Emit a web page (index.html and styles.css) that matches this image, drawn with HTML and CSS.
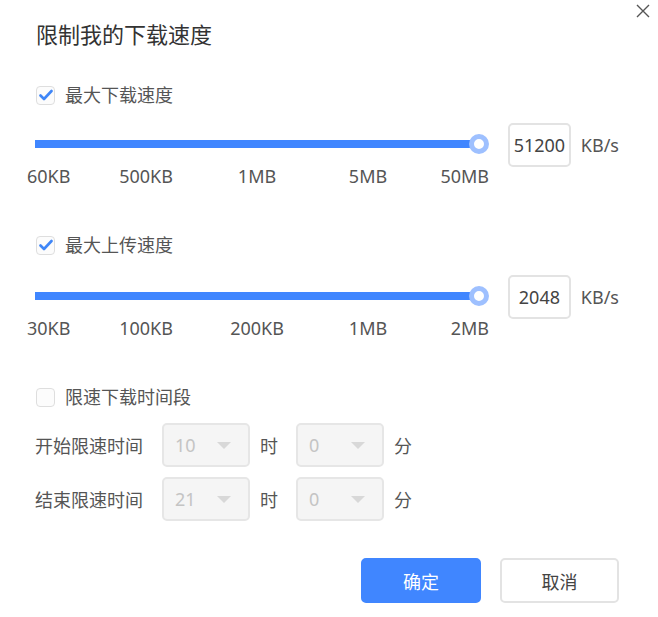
FILE: index.html
```html
<!DOCTYPE html>
<html lang="zh-CN">
<head>
<meta charset="utf-8">
<title>限制我的下载速度</title>
<link rel="stylesheet" href="styles.css">
</head>
<body>
<div class="dialog">
  <button class="close" aria-label="关闭">
    <svg width="14" height="14" viewBox="0 0 14 14"><path d="M1 1L13 13M13 1L1 13" stroke="#555" stroke-width="1.4" fill="none"/></svg>
  </button>
  <h1 class="title">限制我的下载速度</h1>

  <div class="check-row first">
    <span class="checkbox checked"><svg width="14" height="12" viewBox="0 0 14 12"><path d="M1.5 6.5L5 10L12.5 2" stroke="#3f86f7" stroke-width="2.6" fill="none" stroke-linecap="round" stroke-linejoin="round"/></svg></span>
    <span class="check-label">最大下载速度</span>
  </div>
  <div class="slider-row">
    <div class="slider"><div class="track"></div><div class="thumb"></div></div>
    <div class="num-input">51200</div>
    <span class="unit">KB/s</span>
  </div>
  <div class="ticks">
    <span class="tick t0">60KB</span>
    <span class="tick t1">500KB</span>
    <span class="tick t2">1MB</span>
    <span class="tick t3">5MB</span>
    <span class="tick t4">50MB</span>
  </div>

  <div class="check-row second">
    <span class="checkbox checked"><svg width="14" height="12" viewBox="0 0 14 12"><path d="M1.5 6.5L5 10L12.5 2" stroke="#3f86f7" stroke-width="2.6" fill="none" stroke-linecap="round" stroke-linejoin="round"/></svg></span>
    <span class="check-label">最大上传速度</span>
  </div>
  <div class="slider-row s2">
    <div class="slider"><div class="track"></div><div class="thumb"></div></div>
    <div class="num-input">2048</div>
    <span class="unit">KB/s</span>
  </div>
  <div class="ticks">
    <span class="tick t0">30KB</span>
    <span class="tick t1">100KB</span>
    <span class="tick t2">200KB</span>
    <span class="tick t3">1MB</span>
    <span class="tick t4">2MB</span>
  </div>

  <div class="check-row third">
    <span class="checkbox"></span>
    <span class="check-label">限速下载时间段</span>
  </div>
  <div class="time-row first">
    <span class="time-label">开始限速时间</span>
    <div class="select"><span class="sel-val">10</span><span class="arrow"></span></div>
    <span class="time-unit">时</span>
    <div class="select"><span class="sel-val">0</span><span class="arrow"></span></div>
    <span class="time-unit">分</span>
  </div>
  <div class="time-row">
    <span class="time-label">结束限速时间</span>
    <div class="select"><span class="sel-val">21</span><span class="arrow"></span></div>
    <span class="time-unit">时</span>
    <div class="select"><span class="sel-val">0</span><span class="arrow"></span></div>
    <span class="time-unit">分</span>
  </div>

  <div class="buttons">
    <button class="btn primary">确定</button>
    <button class="btn">取消</button>
  </div>
</div>
</body>
</html>
```
FILE: styles.css
```css
* { box-sizing: border-box; }
html, body { margin: 0; padding: 0; background: #fff; }
body {
  font-family: "Noto Sans", "Noto Sans CJK SC", sans-serif;
  color: #555;
  width: 658px;
  height: 617px;
  overflow: hidden;
}
.dialog {
  position: relative;
  width: 658px;
  height: 617px;
  padding: 19px 39px 0 35px;
}
.close {
  position: absolute;
  top: 4px;
  right: 8px;
  border: 0;
  background: none;
  padding: 0;
  width: 14px;
  height: 14px;
  display: block;
}
.close svg { display: block; }
.title {
  margin: 0 0 0 1px;
  height: 30px;
  display: flex;
  align-items: center;
  font-size: 22px;
  line-height: 30px;
  font-weight: normal;
  color: #333;
}
.check-row {
  display: flex;
  align-items: center;
  height: 24px;
  margin-left: 1px;
}
.check-row.first { margin-top: 34px; }
.check-row.second { margin-top: 44px; }
.check-row.third { margin-top: 44px; }
.checkbox {
  width: 19px;
  height: 19px;
  border: 1.5px solid #dedede;
  border-radius: 4px;
  background: #fcfcfc;
  display: flex;
  align-items: center;
  justify-content: center;
}
.checkbox svg { display: block; }
.check-label {
  margin-left: 10px;
  font-size: 18px;
  line-height: 24px;
  color: #555;
}
.slider-row {
  display: flex;
  align-items: center;
  height: 44px;
  margin-top: 16px;
}
.slider-row.s2 { margin-top: 18px; }
.slider {
  position: relative;
  width: 454px;
  height: 22px;
  margin-right: 20px;
}
.track {
  position: absolute;
  left: 0;
  top: 6px;
  width: 444px;
  height: 8px;
  background: #4086ff;
}
.thumb {
  position: absolute;
  left: 434px;
  top: 0;
  width: 20px;
  height: 20px;
  border-radius: 50%;
  background: #fff;
  border: 5px solid #9ec0ff;
}
.num-input {
  width: 63px;
  height: 44px;
  border: 2px solid #e3e3e3;
  border-radius: 5px;
  font-size: 18px;
  color: #444;
  display: flex;
  align-items: center;
  justify-content: center;
}
.unit {
  margin-left: 10px;
  font-size: 18px;
  color: #555;
}
.ticks {
  position: relative;
  width: 444px;
  height: 22px;
  font-size: 18px;
  line-height: 18px;
  color: #555;
}
.tick { position: absolute; top: 0; white-space: nowrap; }
.tick.t0 { left: -8px; }
.tick.t1 { left: 25%; transform: translateX(-50%); }
.tick.t2 { left: 50%; transform: translateX(-50%); }
.tick.t3 { left: 75%; transform: translateX(-50%); }
.tick.t4 { right: -10px; }
.time-row {
  display: flex;
  align-items: center;
  height: 44px;
  margin-top: 10px;
  font-size: 18px;
}
.time-row.first { margin-top: 14px; }
.time-label { width: 127px; color: #555; white-space: nowrap; }
.select {
  width: 88px;
  height: 44px;
  border: 2px solid #e6e6e6;
  border-radius: 5px;
  background: #f5f5f5;
  display: flex;
  align-items: center;
  justify-content: space-between;
  padding: 0 17px 0 11px;
}
.sel-val { color: #c4c4c4; font-size: 18px; }
.arrow {
  width: 0;
  height: 0;
  border-left: 7.5px solid transparent;
  border-right: 7.5px solid transparent;
  border-top: 7px solid #d8d8d8;
}
.time-unit { margin: 0 18px 0 10px; color: #555; }
.buttons {
  display: flex;
  justify-content: flex-end;
  gap: 19px;
  margin-top: 37px;
}
.btn {
  width: 119px;
  height: 45px;
  border-radius: 5px;
  border: 2px solid #e3e3e3;
  background: #fff;
  font-family: inherit;
  font-size: 18px;
  color: #444;
  padding: 0;
}
.btn.primary {
  width: 120px;
  background: #4086ff;
  border-color: #4086ff;
  color: #fff;
}
```
